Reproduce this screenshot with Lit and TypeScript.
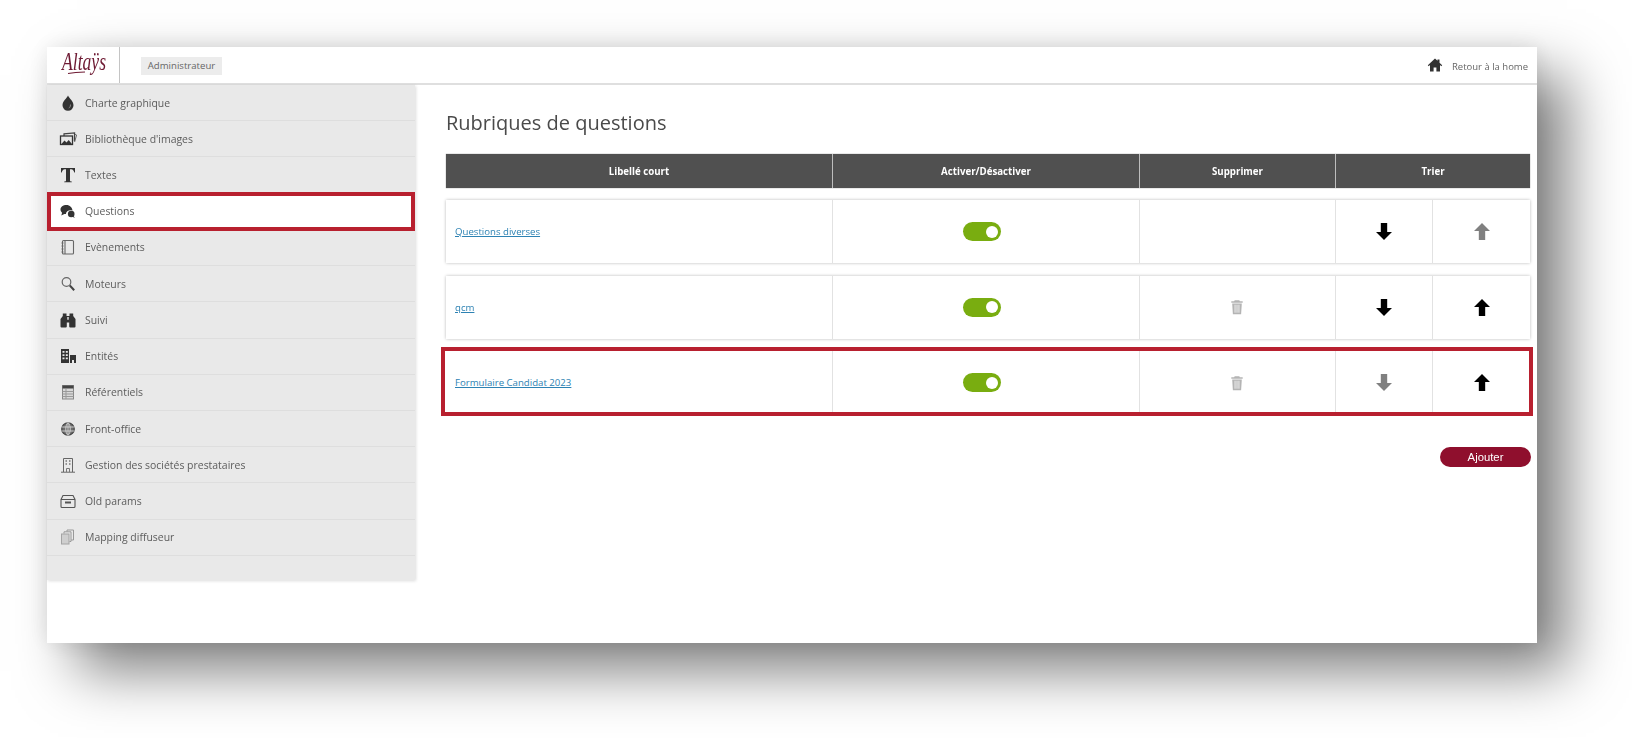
import { LitElement, html, css, svg } from "lit";
import { customElement } from "lit/decorators.js";

const ICONS: Record<string, unknown> = {
  drop: svg`<path fill="#333" d="M9 1.500c1 2.600 5.500 5.600 5.500 9.800a5.500 5.500 0 0 1-11 0c0-4.200 4.500-7.200 5.500-9.800z"/><path fill="#888" d="M12 10.500c.2 2.200-1 3.700-2.800 3.900 1.500-1 1.800-2.400 1.800-3.900z"/>`,
  images: svg`<path fill="none" stroke="#444" stroke-width="1.200" d="M5 6V3.800l10.600-1-.2 8.200"/><path fill="none" stroke="#666" d="M16 4.400l1.600.6-2 7"/><rect x="1.500" y="6" width="12" height="8.500" fill="#e8e8e8" stroke="#333" stroke-width="1.300"/><path fill="#333" d="M2 14.500l3.500-4 2 2 2.200-2.600 3.600 4.600z"/>`,
  text: svg`<path fill="#333" d="M2 2h14v4.500h-.7c-.5-2-1.400-3.300-3-3.300H11v11.200c0 .7.400 1 1.800 1.100v.8H5.200v-.8c1.400-.1 1.800-.4 1.800-1.100V3.200H5.700c-1.600 0-2.500 1.300-3 3.300H2z"/>`,
  chat: svg`<path fill="#333" d="M7.500 3C3.900 3 1.500 5 1.500 7.500c0 1.300.7 2.400 1.600 3.200L2.300 13.500l3.100-1.600c.5.100 1 .2 1.500.2C7 9.800 9 8.300 11.600 8.300c.8 0 1.400.1 1.900.4-.1-3.200-2.800-5.700-6-5.700z"/><circle cx="12.200" cy="12" r="3.300" fill="#333"/><path fill="#333" d="M14 13.500l2 2.200-3.200-.9z"/>`,
  book: svg`<rect x="3.500" y="2.500" width="11" height="13.500" rx="1" fill="none" stroke="#666" stroke-width="1.100"/><path stroke="#666" stroke-width="1.100" d="M6 2.500v13.500"/><path stroke="#666" d="M2.500 5h2M2.500 8h2M2.500 11h2M2.500 14h2"/>`,
  search: svg`<circle cx="7.500" cy="7" r="4.300" fill="none" stroke="#666" stroke-width="1.200"/><path stroke="#444" stroke-width="2" d="M10.800 10.500l4.400 4.800"/>`,
  binoculars: svg`<path fill="#333" d="M3.800 2.500h3.700v2.500h3V2.500h3.700V5l2.300 3v7.500a1 1 0 0 1-1 1h-4.300a1 1 0 0 1-1-1v-4H7.800v4a1 1 0 0 1-1 1H2.500a1 1 0 0 1-1-1V8l2.300-3z"/><path fill="#e8e8e8" d="M8.300 6h1.400v2.800H8.300z"/>`,
  building: svg`<path fill="#333" d="M2 2h8v14H2z"/><path fill="#333" d="M11 8h6v8h-2v-3h-2v3h-2z"/><path fill="#e8e8e8" d="M3.500 4h2v1.800h-2zM6.800 4h2v1.800h-2zM3.500 7.200h2V9h-2zM6.800 7.200h2V9h-2zM3.500 10.400h2v1.800h-2zM6.800 10.400h2v1.800h-2z"/>`,
  table: svg`<rect x="3.500" y="2.500" width="11" height="13.500" fill="#d8d8d8" stroke="#888"/><path fill="#444" d="M3.500 2.500h11v3H3.500z"/><path stroke="#999" d="M3.500 8.500h11M3.500 11h11M3.500 13.500h11M7 6v10"/>`,
  globe: svg`<circle cx="9" cy="9" r="6.300" fill="#6e6e6e" stroke="#444" stroke-width="1.100"/><path fill="none" stroke="#e0e0e0" stroke-width=".8" d="M2.800 7h12.400M2.800 11h12.400M9 2.700v12.600M9 2.700C6 5 6 13 9 15.300M9 2.700c3 2.300 3 10.300 0 12.600"/>`,
  office: svg`<path fill="none" stroke="#666" stroke-width="1" d="M4.500 16V2.500h9V16M2 16.200h14"/><path fill="none" stroke="#777" d="M7.500 16v-3.500h3V16"/><path stroke="#777" stroke-width="1.300" d="M6.500 5h1.500M10 5h1.500M6.500 8h1.500M10 8h1.500"/>`,
  archive: svg`<path fill="none" stroke="#555" stroke-width="1.100" d="M2 7.500l2-4h10l2 4v7a1 1 0 0 1-1 1H3a1 1 0 0 1-1-1zM2 7.500h14"/><path fill="#555" d="M6 9.500h6v2H6z"/>`,
  copies: svg`<rect x="2.500" y="6" width="7.500" height="10" fill="#cfcfcf" stroke="#a4a4a4"/><path fill="none" stroke="#999" stroke-width="1" d="M5 5.500V3.800h7V13.500H10.500M8 3.500V2h6.500v10h-2.400"/>`,
};

const HOME = svg`<path fill="#333" d="M8 1.500L.8 8.200l.9 1L3 8v6.500h3.600V10.500h2.800v4H13V8l1.300 1.200.9-1-2.700-2.500V2.500h-2v1.300z"/>`;
const TRASH = svg`<path fill="currentColor" d="M4 1h4l.5 1H11v1.300H1V2h2.500zM1.800 4h8.400l-.6 9.300H2.400z"/><path stroke="#fff" stroke-width=".7" d="M4.300 5v7M6 5v7M7.700 5v7"/>`;
const DOWN = svg`<path fill="currentColor" d="M4.500 0h6v8.500H15L7.500 16 0 8.500h4.500z"/>`;
const UP = svg`<path fill="currentColor" d="M7.500 0L15 7.500h-4.500V16h-6V7.500H0z"/>`;

const MENU = [
  ["drop", "Charte graphique"],
  ["images", "Bibliothèque d'images"],
  ["text", "Textes"],
  ["chat", "Questions"],
  ["book", "Evènements"],
  ["search", "Moteurs"],
  ["binoculars", "Suivi"],
  ["building", "Entités"],
  ["table", "Référentiels"],
  ["globe", "Front-office"],
  ["office", "Gestion des sociétés prestataires"],
  ["archive", "Old params"],
  ["copies", "Mapping diffuseur"],
];

const ROWS = [
  { label: "Questions diverses", trash: false, down: true, up: false, mark: false },
  { label: "qcm", trash: true, down: true, up: true, mark: false },
  { label: "Formulaire Candidat 2023", trash: true, down: false, up: true, mark: true },
];

@customElement("app-root")
export class AppRoot extends LitElement {
  static styles = css`
    :host {
      display: block;
      width: 1632px;
      height: 738px;
      padding: 47px 0 0 47px;
      box-sizing: border-box;
      background: #fff;
      overflow: hidden;
      font-family: "Open Sans", "Liberation Sans", sans-serif;
      color: #555;
    }
    .panel {
      width: 1490px;
      height: 596px;
      background: #fff;
      box-shadow: 30px 28px 54px rgba(0, 0, 0, 0.5), 0 0 22px rgba(0, 0, 0, 0.1);
      display: flex;
      flex-direction: column;
      filter: blur(0.5px);
    }
    .top {
      height: 38px;
      flex: none;
      box-sizing: border-box;
      border-bottom: 2px solid #dfdfdf;
      display: flex;
      align-items: center;
    }
    .logo {
      width: 73px;
      height: 36px;
      box-sizing: border-box;
      border-right: 1px solid #c4c4c4;
      flex: none;
    }
    .logo svg { display: block; overflow: visible; }
    .logo text {
      font-family: "Liberation Serif", serif;
      font-style: italic;
      font-size: 26px;
      fill: #6e1a33;
    }
    .chip {
      margin-left: 21px;
      margin-top: 1px;
      height: 18px;
      width: 81px;
      background: #ececec;
      font-size: 9.6px;
      line-height: 18px;
      text-align: center;
      color: #666;
    }
    .home {
      margin-left: auto;
      margin-right: 9px;
      margin-top: 2px;
      display: flex;
      align-items: center;
      gap: 9px;
      font-size: 9.5px;
      color: #666;
    }
    .home svg { display: block; margin-top: -3px; }
    .body { flex: 1; display: flex; min-height: 0; }
    .side {
      width: 368px;
      height: 495px;
      flex: none;
      background: #e9e9e9;
      box-shadow: 1px 1px 3px rgba(0, 0, 0, 0.14);
    }
    .item {
      position: relative;
      height: 36.22px;
      box-sizing: border-box;
      border-bottom: 1px solid #dedede;
      display: flex;
      align-items: center;
      gap: 8px;
      padding-left: 12px;
      font-size: 10.45px;
      color: #5c5c5c;
    }
    .item svg { flex: none; display: block; }
    .item.mark { background: #fff; }
    .item.mark::after, .row.mark::after {
      content: "";
      position: absolute;
      border: 4px solid #b8202f;
      box-sizing: border-box;
      pointer-events: none;
    }
    .item.mark::after { left: 0; right: 0; top: -2px; bottom: -2px; }
    .main { flex: 1; padding: 26px 7px 0 31px; min-width: 0; }
    h1 {
      margin: 0 0 19px;
      font-size: 20px;
      font-weight: 400;
      line-height: 24px;
      color: #4a4a4a;
    }
    .head, .row {
      display: grid;
      grid-template-columns: 386px 307px 196px 97px 98px;
    }
    .head {
      height: 34px;
      background: #505050;
      color: #fff;
      font-size: 9.7px;
      font-weight: 700;
      margin-bottom: 12px;
      box-shadow: 0 0 1px rgba(0, 0, 0, 0.5);
    }
    .head div {
      display: flex;
      align-items: center;
      justify-content: center;
      border-left: 1px solid #bdbdbd;
    }
    .head div:first-child { border-left: 0; }
    .head .wide { grid-column: span 2; }
    .row {
      position: relative;
      height: 63px;
      margin-bottom: 12.7px;
      background: #fff;
      box-shadow: 0 0 3px rgba(0, 0, 0, 0.28);
    }
    .row.mark { box-shadow: none; margin-bottom: 33px; }
    .row.mark::after { left: -5px; right: -3px; top: -4px; bottom: -2px; }
    .cell {
      display: flex;
      align-items: center;
      justify-content: center;
      border-left: 1px solid #e2e2e2;
    }
    .cell svg { display: block; }
    .cell.name { justify-content: flex-start; padding-left: 9px; border-left: 0; }
    a {
      color: #2d82b3;
      font-size: 9.65px;
      text-decoration: underline;
    }
    .toggle {
      width: 38px;
      height: 19px;
      margin-right: 8px;
      border-radius: 10px;
      background: #79ad10;
      display: flex;
      align-items: center;
      justify-content: flex-end;
      padding-right: 3px;
      box-sizing: border-box;
    }
    .toggle i { width: 12px; height: 12px; border-radius: 50%; background: #fff; }
    .on { color: #000; }
    .off { color: #808080; }
    .trash { color: #b4b4b4; margin-right: 2px; }
    .actions { display: flex; justify-content: flex-end; margin-right: -1px; }
    button {
      width: 91px;
      height: 20px;
      border: 0;
      border-radius: 10px;
      padding: 0;
      background: #8f0f2d;
      color: #fff;
      font-family: "Liberation Sans", sans-serif;
      font-size: 11.3px;
    }
  `;

  render() {
    return html`
      <div class="panel">
        <div class="top">
          <div class="logo">
            <svg width="72" height="36" viewBox="0 0 72 36">
              <text x="15" y="23" textLength="44" lengthAdjust="spacingAndGlyphs">Altaÿs</text>
              <path d="M21 26.500c6-1 11-1.300 17-1.500" stroke="#6e1a33" stroke-width="1.200" fill="none"/>
            </svg>
          </div>
          <div class="chip">Administrateur</div>
          <div class="home">
            <svg width="16" height="16" viewBox="0 0 16 16">${HOME}</svg>
            <span>Retour à la home</span>
          </div>
        </div>
        <div class="body">
          <nav class="side">
            ${MENU.map(
              ([icon, label]) => html`
                <div class="item ${label === "Questions" ? "mark" : ""}">
                  <svg width="18" height="18" viewBox="0 0 18 18">${ICONS[icon]}</svg>
                  <span>${label}</span>
                </div>
              `
            )}
          </nav>
          <main class="main">
            <h1>Rubriques de questions</h1>
            <div class="head">
              <div>Libellé court</div>
              <div>Activer/Désactiver</div>
              <div>Supprimer</div>
              <div class="wide">Trier</div>
            </div>
            ${ROWS.map(
              (r) => html`
                <div class="row ${r.mark ? "mark" : ""}">
                  <div class="cell name"><a href="#">${r.label}</a></div>
                  <div class="cell"><span class="toggle"><i></i></span></div>
                  <div class="cell">
                    ${r.trash
                      ? html`<svg class="trash" width="14" height="16" viewBox="0 0 12 14">${TRASH}</svg>`
                      : null}
                  </div>
                  <div class="cell ${r.down ? "on" : "off"}">
                    <svg width="16" height="17" viewBox="0 0 15 16">${DOWN}</svg>
                  </div>
                  <div class="cell ${r.up ? "on" : "off"}">
                    <svg width="16" height="17" viewBox="0 0 15 16">${UP}</svg>
                  </div>
                </div>
              `
            )}
            <div class="actions"><button>Ajouter</button></div>
          </main>
        </div>
      </div>
    `;
  }
}
